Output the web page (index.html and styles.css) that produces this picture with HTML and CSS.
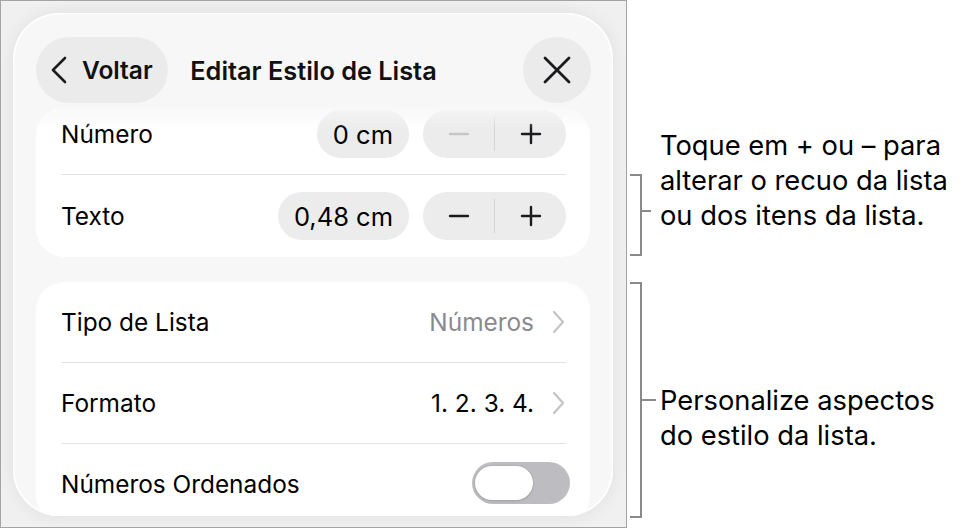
FILE: index.html
```html
<!DOCTYPE html>
<html lang="pt">
<head>
<meta charset="utf-8">
<title>Editar Estilo de Lista</title>
<link rel="stylesheet" href="styles.css">
</head>
<body>
<div class="page">
  <div class="shot">
    <div class="sheet">
      <header class="nav">
        <button class="back">
          <svg class="back-icon" width="18" height="28" viewBox="0 0 18 28"><polyline points="15,2 3,14 15,26" fill="none" stroke="#1c1c1e" stroke-width="2.6" stroke-linecap="round" stroke-linejoin="round"/></svg>
          <span>Voltar</span>
        </button>
        <div class="title">Editar Estilo de Lista</div>
        <button class="close">
          <svg width="30" height="30" viewBox="0 0 30 30"><path d="M3 3 L27 27 M27 3 L3 27" fill="none" stroke="#1c1c1e" stroke-width="2.8" stroke-linecap="round"/></svg>
        </button>
      </header>
      <div class="content">
        <section class="card card-indent">
          <div class="row row-first">
            <span class="label">Número</span>
            <span class="value-pill">0 cm</span>
            <div class="stepper">
              <span class="step step-off"><svg width="22" height="22" viewBox="0 0 22 22"><path d="M2 11 H20" stroke="currentColor" stroke-width="2.4" stroke-linecap="round"/></svg></span>
              <span class="step-div"></span>
              <span class="step"><svg width="22" height="22" viewBox="0 0 22 22"><path d="M2 11 H20 M11 2 V20" stroke="currentColor" stroke-width="2.4" stroke-linecap="round"/></svg></span>
            </div>
          </div>
          <div class="sep"></div>
          <div class="row row-second">
            <span class="label">Texto</span>
            <span class="value-pill">0,48 cm</span>
            <div class="stepper">
              <span class="step"><svg width="22" height="22" viewBox="0 0 22 22"><path d="M2 11 H20" stroke="currentColor" stroke-width="2.4" stroke-linecap="round"/></svg></span>
              <span class="step-div"></span>
              <span class="step"><svg width="22" height="22" viewBox="0 0 22 22"><path d="M2 11 H20 M11 2 V20" stroke="currentColor" stroke-width="2.4" stroke-linecap="round"/></svg></span>
            </div>
          </div>
        </section>
        <section class="card card-list">
          <div class="row">
            <span class="label">Tipo de Lista</span>
            <span class="detail detail-muted">Números</span>
            <svg class="chev" width="14" height="24" viewBox="0 0 14 24"><polyline points="3,2 12,12 3,22" fill="none" stroke="#c4c4c7" stroke-width="2.2" stroke-linecap="round" stroke-linejoin="round"/></svg>
          </div>
          <div class="sep"></div>
          <div class="row">
            <span class="label">Formato</span>
            <span class="detail">1. 2. 3. 4.</span>
            <svg class="chev" width="14" height="24" viewBox="0 0 14 24"><polyline points="3,2 12,12 3,22" fill="none" stroke="#c4c4c7" stroke-width="2.2" stroke-linecap="round" stroke-linejoin="round"/></svg>
          </div>
          <div class="sep"></div>
          <div class="row">
            <span class="label">Números Ordenados</span>
            <span class="toggle"><span class="knob"></span></span>
          </div>
        </section>
      </div>
    </div>
  </div>
  <aside class="notes">
    <svg class="brackets" width="333" height="529" viewBox="0 0 333 529">
      <path d="M3 175 H14 V255 H3 M14 211 H24" fill="none" stroke="#8a8a8a" stroke-width="2"/>
      <path d="M3 283 H14 V517 H3 M14 400 H29" fill="none" stroke="#8a8a8a" stroke-width="2"/>
    </svg>
    <p class="note note-1">Toque em + ou – para<br>alterar o recuo da lista<br>ou dos itens da lista.</p>
    <p class="note note-2">Personalize aspectos<br>do estilo da lista.</p>
  </aside>
</div>
</body>
</html>
```
FILE: styles.css
```css
* { box-sizing: border-box; }
html, body { margin: 0; padding: 0; background: #fff; }
body { font-family: Inter, "Noto Sans", sans-serif; color: #000; }

.page {
  display: flex;
  width: 960px;
  height: 529px;
  overflow: hidden;
}

.shot {
  width: 627px;
  height: 528px;
  border: 1px solid #a4a4a4;
  background: #f0f0f0;
  padding: 12px 0 0 12px;
  flex: none;
}

.sheet {
  width: 600px;
  height: 503px;
  border-radius: 46px;
  background: #f7f7f7;
  box-shadow: inset 0 0 0 1.5px #ffffff, 0 0 18px rgba(0,0,0,0.07);
  overflow: hidden;
  display: flex;
  flex-direction: column;
}

.nav {
  display: grid;
  grid-template-columns: 1fr auto 1fr;
  align-items: center;
  padding: 24px 22px 0 23px;
  height: 90px;
  flex: none;
}

.back {
  justify-self: start;
  display: flex;
  align-items: center;
  gap: 14px;
  width: 132px;
  height: 66px;
  border: 0;
  border-radius: 33px;
  background: #ebebeb;
  padding: 0 0 0 14px;
  font: 600 24.5px Inter, sans-serif;
  color: #111;
}

.title {
  font-weight: 600;
  font-size: 25.3px;
  color: #111;
  white-space: nowrap;
}

.close {
  justify-self: end;
  width: 68px;
  height: 66px;
  border: 0;
  border-radius: 50%;
  background: #ebebeb;
  display: flex;
  align-items: center;
  justify-content: center;
  padding: 0;
}

.content {
  padding: 4px 23px 0 23px;
  display: flex;
  flex-direction: column;
  gap: 25px;
}

.card {
  background: #fff;
  border-radius: 28px;
  position: relative;
  flex: none;
}

.card-indent::after {
  content: "";
  position: absolute;
  left: 0; right: 0; top: 0;
  height: 22px;
  border-radius: 28px 28px 0 0;
  background: linear-gradient(rgba(247,247,247,0.85), rgba(255,255,255,0));
  pointer-events: none;
}

.row {
  display: flex;
  align-items: center;
  height: 80px;
  padding: 0 24px 0 25px;
  font-size: 24.4px;
}

.row-first { height: 67px; padding-bottom: 13px; }
.row-second { height: 82px; }

.sep {
  height: 1px;
  margin: 0 24px 0 25px;
  background: #e2e2e4;
}

.label { flex: 1; white-space: nowrap; }

.value-pill {
  height: 48px;
  border-radius: 24px;
  background: #ececec;
  padding: 0 16px;
  display: flex;
  align-items: center;
  font-size: 25.5px;
  margin-right: 14px;
}

.stepper {
  display: flex;
  align-items: center;
  width: 143px;
  height: 48px;
  border-radius: 24px;
  background: #ececec;
}

.step {
  flex: 1;
  display: flex;
  align-items: center;
  justify-content: center;
  color: #1c1c1e;
}

.step-off { color: #c6c6c8; }

.step-div {
  width: 1px;
  height: 34px;
  background: #d6d6d6;
}

.detail { font-size: 24.4px; margin-right: 17px; }
.detail-muted { color: #8a8a8e; }

.chev { flex: none; margin-right: 1px; }

.toggle {
  width: 98px;
  height: 42px;
  border-radius: 21px;
  background: #bdbdc1;
  margin-right: -4px;
  margin-top: -2px;
  padding: 4px 3px;
  display: flex;
}

.knob {
  width: 58px;
  height: 34px;
  border-radius: 17px;
  background: #fff;
  box-shadow: 0 0 0 1px rgba(0,0,0,0.04), 0 1px 3px rgba(0,0,0,0.12);
}

.notes {
  position: relative;
  flex: 1;
  padding-left: 33px;
}

.brackets {
  position: absolute;
  left: 0;
  top: 0;
}

.note {
  margin: 0;
  font-size: 27.3px;
  line-height: 35px;
  color: #000;
  white-space: nowrap;
}

.note-1 { margin-top: 128px; }
.note-2 { margin-top: 150px; }
```
